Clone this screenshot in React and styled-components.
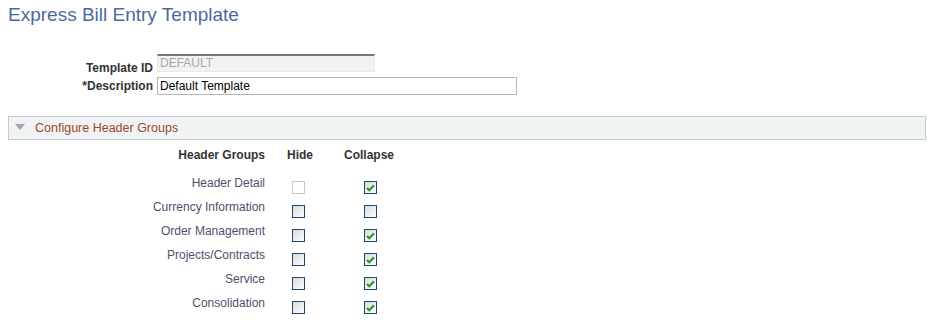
import styled, { createGlobalStyle } from "styled-components";

const GlobalStyle = createGlobalStyle`
  body {
    margin: 0;
    background: #ffffff;
    font-family: "Liberation Sans", Arial, sans-serif;
    font-size: 12px;
  }
`;

const Page = styled.div`
  padding: 4px 8px 0 8px;
  width: 918px;
`;

const Title = styled.h1`
  margin: 0;
  font-size: 19px;
  line-height: 21px;
  font-weight: normal;
  color: #4b6a9b;
`;

const Form = styled.div`
  display: grid;
  grid-template-columns: 145px auto;
  column-gap: 4px;
  row-gap: 5px;
  margin-top: 29px;
  justify-items: start;
`;

const Label = styled.label`
  justify-self: end;
  align-self: ${({ $low }) => ($low ? "end" : "center")};
  font-weight: bold;
  color: #333333;
  line-height: 14px;
  margin-bottom: ${({ $low }) => ($low ? "-3px" : "0")};
`;

const TextInput = styled.div`
  box-sizing: border-box;
  width: ${({ $w }) => $w}px;
  height: 18px;
  padding: 0 2px;
  line-height: 16px;
  color: ${({ $disabled }) => ($disabled ? "#a8a8a8" : "#000000")};
  background: ${({ $disabled }) => ($disabled ? "#f2f2f2" : "#ffffff")};
  border: 1px solid ${({ $disabled }) => ($disabled ? "#ebeae0" : "#b5b5b5")};
  border-top: ${({ $disabled }) =>
    $disabled ? "2px solid #7d7869" : "1px solid #b5b5b5"};
  ${({ $disabled }) => $disabled && "line-height: 15px;"}
`;

const Section = styled.div`
  margin-top: 21px;
  box-sizing: border-box;
  height: 24px;
  display: flex;
  align-items: center;
  gap: 10px;
  padding-left: 6px;
  background: #eff3f3;
  border: 1px solid #c5ccd0;
`;

const Triangle = styled.span`
  width: 0;
  height: 0;
  border-left: 5px solid transparent;
  border-right: 5px solid transparent;
  border-top: 6px solid #a9a2b3;
  margin-top: -3px;
`;

const SectionTitle = styled.span`
  color: #a1452f;
  font-size: 12.5px;
`;

const Table = styled.div`
  display: grid;
  grid-template-columns: 257px 70px 70px;
  grid-template-rows: 28px;
  grid-auto-rows: 24px;
  margin-top: 8px;
`;

const HeadCell = styled.div`
  font-weight: bold;
  color: #333333;
  line-height: 14px;
  text-align: ${({ $right }) => ($right ? "right" : "center")};
  margin-left: ${({ $shift }) => $shift || 0}px;
`;

const RowLabel = styled.div`
  text-align: right;
  color: #524e6a;
  line-height: 14px;
`;

const BoxCell = styled.div`
  display: flex;
  justify-content: center;
  padding-top: 5px;
  margin-left: ${({ $shift }) => $shift || 0}px;
`;

const Box = styled.span`
  box-sizing: border-box;
  width: 13px;
  height: 13px;
  display: flex;
  align-items: center;
  justify-content: center;
  border: 1px solid ${({ $disabled }) => ($disabled ? "#c9c8c0" : "#1e4a77")};
  background: ${({ $disabled }) =>
    $disabled ? "#ffffff" : "linear-gradient(135deg, #d9d9d6 0%, #ffffff 100%)"};
`;

const Check = () => (
  <svg width="9" height="8" viewBox="0 0 9 8">
    <path d="M1 4 L3.3 6.3 L8 1.2" fill="none" stroke="#1f9a2a" strokeWidth="2" />
  </svg>
);

const CheckBox = ({ checked, disabled }) => (
  <Box $disabled={disabled}>{checked && <Check />}</Box>
);

const rows = [
  { name: "Header Detail", hide: false, hideDisabled: true, collapse: true },
  { name: "Currency Information", hide: false, collapse: false },
  { name: "Order Management", hide: false, collapse: true },
  { name: "Projects/Contracts", hide: false, collapse: true },
  { name: "Service", hide: false, collapse: true },
  { name: "Consolidation", hide: false, collapse: true },
];

export default function App() {
  return (
    <>
      <GlobalStyle />
      <Page>
        <Title>Express Bill Entry Template</Title>
        <Form>
          <Label $low>Template ID</Label>
          <TextInput $w={218} $disabled>
            DEFAULT
          </TextInput>
          <Label>*Description</Label>
          <TextInput $w={360}>Default Template</TextInput>
        </Form>
        <Section>
          <Triangle />
          <SectionTitle>Configure Header Groups</SectionTitle>
        </Section>
        <Table>
          <HeadCell $right>Header Groups</HeadCell>
          <HeadCell>Hide</HeadCell>
          <HeadCell $shift={-2}>Collapse</HeadCell>
          {rows.map((r) => (
            <>
              <RowLabel key={r.name}>{r.name}</RowLabel>
              <BoxCell $shift={-4}>
                <CheckBox checked={r.hide} disabled={r.hideDisabled} />
              </BoxCell>
              <BoxCell>
                <CheckBox checked={r.collapse} />
              </BoxCell>
            </>
          ))}
        </Table>
      </Page>
    </>
  );
}
